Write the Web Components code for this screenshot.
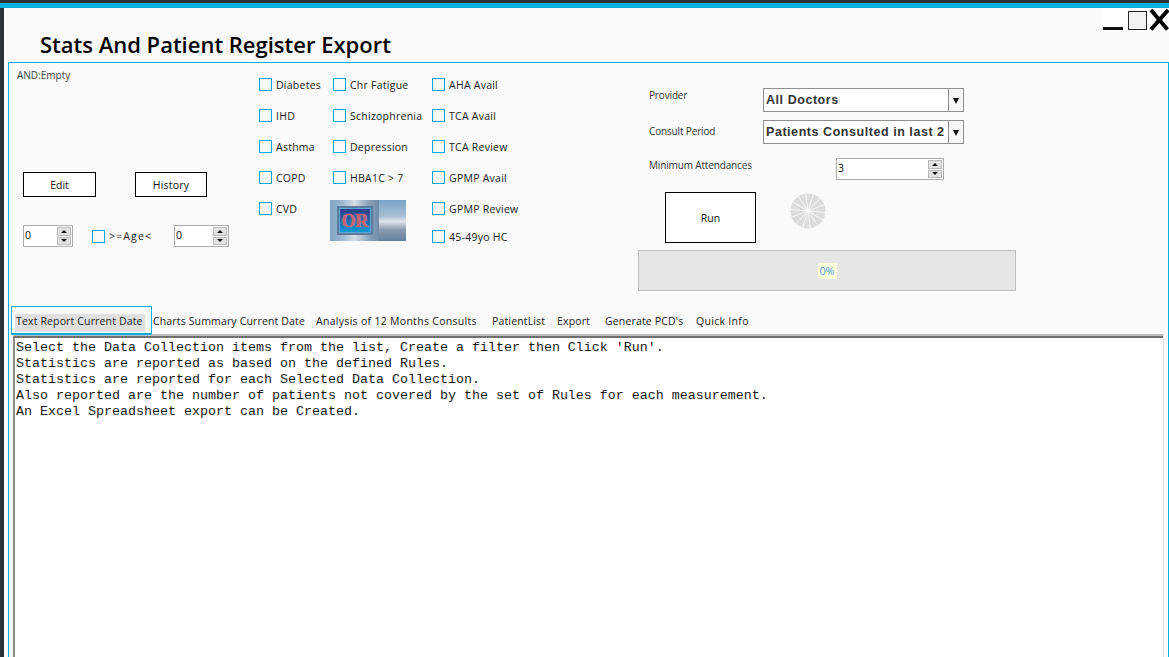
<!DOCTYPE html>
<html>
<head>
<meta charset="utf-8">
<title>Stats And Patient Register Export</title>
<style>
    html, body { margin: 0; height: 100%; overflow: hidden; background: #fafafa; }
    body { font-family: "Open Sans", "Noto Sans", sans-serif; font-size: 11px; color: #111; }
</style>
</head>
<body>

<app-window>
    <window-title slot="title">Stats And Patient Register Export</window-title>

    <filter-panel slot="filters">
        <and-column slot="left"></and-column>

        <check-column slot="checks" style="width:74px">
            <check-box label="Diabetes"></check-box>
            <check-box label="IHD"></check-box>
            <check-box label="Asthma"></check-box>
            <check-box label="COPD"></check-box>
            <check-box label="CVD"></check-box>
        </check-column>
        <check-column slot="checks" style="width:99px">
            <check-box label="Chr Fatigue"></check-box>
            <check-box label="Schizophrenia"></check-box>
            <check-box label="Depression"></check-box>
            <check-box label="HBA1C &gt; 7"></check-box>
            <or-toggle></or-toggle>
        </check-column>
        <check-column slot="checks" style="width:206px">
            <check-box label="AHA Avail"></check-box>
            <check-box label="TCA Avail"></check-box>
            <check-box label="TCA Review"></check-box>
            <check-box label="GPMP Avail"></check-box>
            <check-box label="GPMP Review"></check-box>
            <check-box label="45-49yo HC" tight></check-box>
        </check-column>

        <run-column slot="right"></run-column>
    </filter-panel>

    <tab-strip slot="tabs">
        <tab-item active style="width:141px">Text Report Current Date</tab-item>
        <tab-item style="margin-left:1px;width:151px">Charts Summary Current Date</tab-item>
        <tab-item wide style="margin-left:12px;width:161px">Analysis of 12 Months Consults</tab-item>
        <tab-item style="margin-left:15px;width:53px">PatientList</tab-item>
        <tab-item style="margin-left:12px;width:33px">Export</tab-item>
        <tab-item style="margin-left:15px;width:79px">Generate PCD's</tab-item>
        <tab-item wide style="margin-left:12px;width:60px">Quick Info</tab-item>
    </tab-strip>

    <report-box slot="report">Select the Data Collection items from the list, Create a filter then Click 'Run'.
Statistics are reported as based on the defined Rules.
Statistics are reported for each Selected Data Collection.
Also reported are the number of patients not covered by the set of Rules for each measurement.
An Excel Spreadsheet export can be Created.</report-box>
</app-window>

<script>
//Ventana completa: barras de arriba, titulo y panel azul
class AppWindow extends HTMLElement {
    connectedCallback() {
        let shadow = this.attachShadow({ mode: 'open' });
        shadow.innerHTML = `
            <style>
                :host {
                    display: flex;
                    flex-direction: column;
                    box-sizing: border-box;
                    height: 657px;
                    border-top: 3px solid #2d3135;
                    border-left: 4px solid #2d3135;
                    background: #fafafa;
                }
                .blue { height: 5px; background: #00b0de; margin-left: -4px; flex: none; }
                .frame {
                    flex: 1;
                    min-height: 0;
                    display: flex;
                    flex-direction: column;
                    margin-left: 4px;
                    border: 1px solid #00b0de;
                    border-bottom: 0;
                }
            </style>
            <div class="blue"></div>
            <slot name="title"></slot>
            <div class="frame">
                <slot name="filters"></slot>
                <slot name="tabs"></slot>
                <slot name="report"></slot>
            </div>
        `;
    }
}

class WindowTitle extends HTMLElement {
    connectedCallback() {
        let shadow = this.attachShadow({ mode: 'open' });
        shadow.innerHTML = `
            <style>
                :host {
                    display: flex;
                    justify-content: space-between;
                    align-items: flex-start;
                    height: 54px;
                    flex: none;
                    padding-left: 36px;
                }
                h1 {
                    margin: 22px 0 0;
                    font: 600 22px/28px "Open Sans", sans-serif;
                    color: #000;
                    white-space: nowrap;
                }
                .controls { width: 68px; height: 24px; background: #fff; display: block; }
            </style>
            <h1><slot></slot></h1>
            <svg class="controls" viewBox="0 0 68 24">
                <rect x="2" y="19" width="20" height="3" fill="#111"/>
                <rect x="27.5" y="3.5" width="18" height="18" fill="#f4f4f4" stroke="#222" stroke-width="1"/>
                <path d="M50 2 L66.5 21.5 M67 2 L50 21.5" stroke="#000" stroke-width="4" fill="none"/>
            </svg>
        `;
    }
}

//Contenedor de la parte de arriba con sus columnas
class FilterPanel extends HTMLElement {
    connectedCallback() {
        let shadow = this.attachShadow({ mode: 'open' });
        shadow.innerHTML = `
            <style>
                :host { display: flex; height: 243px; flex: none; }
            </style>
            <slot name="left"></slot>
            <slot name="checks"></slot>
            <slot name="right"></slot>
        `;
    }
}

class AndColumn extends HTMLElement {
    connectedCallback() {
        let shadow = this.attachShadow({ mode: 'open' });
        shadow.innerHTML = `
            <style>
                :host { display: block; width: 250px; flex: none; }
                .and { padding: 5px 0 0 8px; height: 104px; color: #444; font-size: 10px; line-height: 15px; }
                .buttons { display: flex; padding-left: 14px; gap: 39px; }
                .age { display: flex; align-items: center; margin-top: 28px; padding-left: 14px; }
                .age-label { display: flex; align-items: center; margin: 0 22px 0 19px; width: 60px; }
                .hist { letter-spacing: .2px; }
            </style>
            <div class="and">AND:Empty</div>
            <div class="buttons">
                <flat-button style="width:73px;height:25px">Edit</flat-button>
                <flat-button class="hist" style="width:72px;height:25px">History</flat-button>
            </div>
            <div class="age">
                <spin-box value="0" style="width:50px;height:22px"></spin-box>
                <div class="age-label"><check-box label="&gt;=Age&lt;" narrow></check-box></div>
                <spin-box value="0" style="width:55px;height:22px"></spin-box>
            </div>
        `;
    }
}

class CheckColumn extends HTMLElement {
    connectedCallback() {
        let shadow = this.attachShadow({ mode: 'open' });
        shadow.innerHTML = `
            <style>
                :host { display: flex; flex-direction: column; flex: none; padding-top: 6px; box-sizing: border-box; }
            </style>
            <slot></slot>
        `;
    }
}

class CheckBox extends HTMLElement {
    connectedCallback() {
        let shadow = this.attachShadow({ mode: 'open' });
        let narrow = this.hasAttribute('narrow');
        shadow.innerHTML = `
            <style>
                :host {
                    display: flex;
                    align-items: center;
                    height: ${narrow ? 16 : (this.hasAttribute('tight') ? 25 : 31)}px;
                    flex: none;
                    white-space: nowrap;
                    color: #1a1a1a;
                }
                .box {
                    box-sizing: border-box;
                    width: 13px;
                    height: 13px;
                    border: 1px solid #00a8dc;
                    margin-right: 4px;
                    flex: none;
                }
                .txt { font-size: 10.5px; letter-spacing: ${narrow ? '1.15px' : '.25px'}; }
            </style>
            <span class="box"></span><span class="txt">${this.getAttribute('label')}</span>
        `;
    }
}

class FlatButton extends HTMLElement {
    connectedCallback() {
        let shadow = this.attachShadow({ mode: 'open' });
        shadow.innerHTML = `
            <style>
                :host {
                    display: flex;
                    align-items: center;
                    justify-content: center;
                    box-sizing: border-box;
                    flex: none;
                    border: 1px solid #000;
                    background: #fff;
                    color: #111;
                    font-size: 10.5px;
                }
            </style>
            <slot></slot>
        `;
    }
}

//Caja numerica con las dos flechitas
class SpinBox extends HTMLElement {
    connectedCallback() {
        let shadow = this.attachShadow({ mode: 'open' });
        shadow.innerHTML = `
            <style>
                :host {
                    display: flex;
                    box-sizing: border-box;
                    flex: none;
                    border: 1px solid #ababab;
                    background: #fff;
                    font-size: 10.5px;
                }
                .val { flex: 1; padding-left: 1px; line-height: 18px; color: #111; }
                .arrows { display: flex; flex-direction: column; gap: 1px; width: 14px; padding: 1px 1px 1px 0; }
                .arrows div {
                    flex: 1;
                    background: #e2e2e2;
                    border: 1px solid #b9b9b9;
                    display: flex;
                    align-items: center;
                    justify-content: center;
                }
                .up { border-bottom: 3px solid #111; border-left: 3px solid transparent; border-right: 3px solid transparent; }
                .down { border-top: 3px solid #111; border-left: 3px solid transparent; border-right: 3px solid transparent; }
            </style>
            <div class="val">${this.getAttribute('value')}</div>
            <div class="arrows">
                <div><span class="up"></span></div>
                <div><span class="down"></span></div>
            </div>
        `;
    }
}

class ComboBox extends HTMLElement {
    connectedCallback() {
        let shadow = this.attachShadow({ mode: 'open' });
        shadow.innerHTML = `
            <style>
                :host {
                    display: flex;
                    box-sizing: border-box;
                    width: 201px;
                    height: 24px;
                    flex: none;
                    border: 1px solid #8f8f8f;
                    background: #fff;
                }
                .val {
                    flex: 1;
                    min-width: 0;
                    white-space: nowrap;
                    padding-left: 2px;
                    font: bold 12.5px/22px "Liberation Sans", Arial, sans-serif;
                    letter-spacing: .55px;
                    color: #333;
                }
                .btn {
                    width: 14px;
                    flex: none;
                    border-left: 1px solid #8f8f8f;
                    background: #f6f6f6;
                    display: flex;
                    align-items: center;
                    justify-content: center;
                }
                .btn span { border-top: 6px solid #111; border-left: 3.5px solid transparent; border-right: 3.5px solid transparent; margin-top: 2px; }
            </style>
            <div class="val">${this.getAttribute('value')}</div>
            <div class="btn"><span></span></div>
        `;
    }
}

//Imagen del boton OR, con la palabra como texto real
class OrToggle extends HTMLElement {
    connectedCallback() {
        let shadow = this.attachShadow({ mode: 'open' });
        shadow.innerHTML = `
            <style>
                :host {
                    display: flex;
                    width: 76px;
                    height: 41px;
                    flex: none;
                    margin: 7px 0 0 -3px;
                }
                .left {
                    width: 49px;
                    box-sizing: border-box;
                    padding: 8px 8px 8px 9px;
                    background: linear-gradient(90deg, #7fa3c6 0%, #9db7d0 25%, #d6dde6 50%, #8aa0ba 80%, #6f8cab 100%);
                    display: flex;
                }
                .face {
                    flex: 1;
                    box-sizing: border-box;
                    border: 1px solid #5fa8d8;
                    outline: 2px solid #5c7a9c;
                    background: linear-gradient(180deg, #2f3f8c 0%, #2468aa 55%, #0c9ad6 100%);
                    display: flex;
                    align-items: center;
                    justify-content: center;
                    font: bold 18px/1 "Liberation Serif", serif;
                    color: #c8606c;
                    letter-spacing: -.3px;
                    text-shadow: 0 0 1px #f0b0b0;
                }
                .right {
                    flex: 1;
                    background: linear-gradient(180deg, #7ba3c9 0%, #a9bfd4 40%, #dfe5ea 52%, #8d9db1 72%, #627f9f 100%);
                }
            </style>
            <div class="left"><div class="face">OR</div></div>
            <div class="right"></div>
        `;
    }
}

class BusyWheel extends HTMLElement {
    connectedCallback() {
        let shadow = this.attachShadow({ mode: 'open' });
        let lines = '';
        for (let i = 0; i < 7; i++) {
            let a = (i * 180 / 7 + 5) * Math.PI / 180;
            let x = (18 * Math.cos(a)).toFixed(2), y = (18 * Math.sin(a)).toFixed(2);
            lines += `<line x1="${-x}" y1="${-y}" x2="${x}" y2="${y}"/>`;
        }
        shadow.innerHTML = `
            <style>
                :host { display: block; width: 36px; height: 36px; flex: none; }
                svg { display: block; }
            </style>
            <svg width="36" height="36" viewBox="-18 -18 36 36">
                <circle r="17.5" fill="#dcdcdc"/>
                <g stroke="#fafafa" stroke-width=".9">${lines}</g>
            </svg>
        `;
    }
}

class ProgressBar extends HTMLElement {
    connectedCallback() {
        let shadow = this.attachShadow({ mode: 'open' });
        shadow.innerHTML = `
            <style>
                :host {
                    display: flex;
                    align-items: center;
                    justify-content: center;
                    box-sizing: border-box;
                    width: 378px;
                    height: 41px;
                    flex: none;
                    border: 1px solid #bdbdbd;
                    background: #e6e6e6;
                }
                span {
                    display: block;
                    width: 19px;
                    height: 16px;
                    line-height: 16px;
                    text-align: center;
                    background: #ffffe0;
                    color: #4f9fd6;
                    font-size: 11px;
                    letter-spacing: -.2px;
                }
            </style>
            <span>${this.getAttribute('value')}</span>
        `;
    }
}

class RunColumn extends HTMLElement {
    connectedCallback() {
        let shadow = this.attachShadow({ mode: 'open' });
        shadow.innerHTML = `
            <style>
                :host { display: block; flex: none; width: 400px; font-size: 10px; letter-spacing: -.15px; color: #333; }
                .row { display: flex; align-items: center; padding-left: 11px; }
                .row label { width: 114px; flex: none; }
                .row.first { padding-top: 25px; }
                .row.first label { margin-top: -11px; }
                .row.second { padding-top: 8px; }
                .row.second label { margin-top: -3px; }
                .row.third { padding-top: 14px; }
                .row.third label { width: 187px; margin-top: -9px; }
                .run { display: flex; align-items: flex-start; padding: 12px 0 0 27px; height: 58px; letter-spacing: 0; }
                .run flat-button { font-size: 10.5px; }
                .run busy-wheel { margin: 1px 0 0 34px; }
            </style>
            <div class="row first"><label>Provider</label><combo-box value="All Doctors"></combo-box></div>
            <div class="row second"><label>Consult Period</label><combo-box value="Patients Consulted in last 2"></combo-box></div>
            <div class="row third"><label>Minimum Attendances</label><spin-box value="3" style="width:108px;height:22px;letter-spacing:0"></spin-box></div>
            <div class="run">
                <flat-button style="width:91px;height:51px">Run</flat-button>
                <busy-wheel></busy-wheel>
            </div>
            <progress-bar value="0%"></progress-bar>
        `;
    }
}

class TabStrip extends HTMLElement {
    connectedCallback() {
        let shadow = this.attachShadow({ mode: 'open' });
        shadow.innerHTML = `
            <style>
                :host { display: flex; height: 29px; flex: none; padding-left: 2px; position: relative; }
            </style>
            <slot></slot>
        `;
    }
}

class TabItem extends HTMLElement {
    connectedCallback() {
        let shadow = this.attachShadow({ mode: 'open' });
        let active = this.hasAttribute('active');
        shadow.innerHTML = `
            <style>
                :host {
                    display: block;
                    box-sizing: border-box;
                    flex: none;
                    height: 29px;
                    ${active ? 'border: 1px solid #00b0de; border-bottom-width: 2px; padding: 7px 6px 0 3px;' : 'padding-top: 8px;'}
                    position: relative;
                    z-index: 1;
                }
                span {
                    display: block;
                    height: 18px;
                    line-height: 15px;
                    white-space: nowrap;
                    font-size: 10.5px;
                    letter-spacing: ${this.hasAttribute('wide') ? '.3px' : '.15px'};
                    color: #222;
                    ${active ? 'background: #e0e0e0; padding-left: 1px;' : ''}
                }
            </style>
            <span><slot></slot></span>
        `;
    }
}

class ReportBox extends HTMLElement {
    connectedCallback() {
        let shadow = this.attachShadow({ mode: 'open' });
        shadow.innerHTML = `
            <style>
                :host {
                    display: block;
                    flex: 1;
                    min-height: 0;
                    margin: -1px 4px 0 4px;
                    box-sizing: border-box;
                    background: #fff;
                    border-top: 2px solid #c0c0c0;
                    border-right: 1px solid #e2e2e2;
                }
                .in {
                    height: 100%;
                    box-sizing: border-box;
                    border-top: 2px solid #707070;
                    border-left: 2px solid #8a8a8a;
                    padding: 2px 0 0 1px;
                    font: 13.33px/16px "Liberation Mono", "Courier New", monospace;
                    color: #1a1a1a;
                    white-space: pre;
                }
            </style>
            <div class="in"><slot></slot></div>
        `;
    }
}

window.customElements.define('app-window', AppWindow);
window.customElements.define('window-title', WindowTitle);
window.customElements.define('filter-panel', FilterPanel);
window.customElements.define('and-column', AndColumn);
window.customElements.define('check-column', CheckColumn);
window.customElements.define('check-box', CheckBox);
window.customElements.define('flat-button', FlatButton);
window.customElements.define('spin-box', SpinBox);
window.customElements.define('combo-box', ComboBox);
window.customElements.define('or-toggle', OrToggle);
window.customElements.define('busy-wheel', BusyWheel);
window.customElements.define('progress-bar', ProgressBar);
window.customElements.define('run-column', RunColumn);
window.customElements.define('tab-strip', TabStrip);
window.customElements.define('tab-item', TabItem);
window.customElements.define('report-box', ReportBox);
</script>
</body>
</html>
